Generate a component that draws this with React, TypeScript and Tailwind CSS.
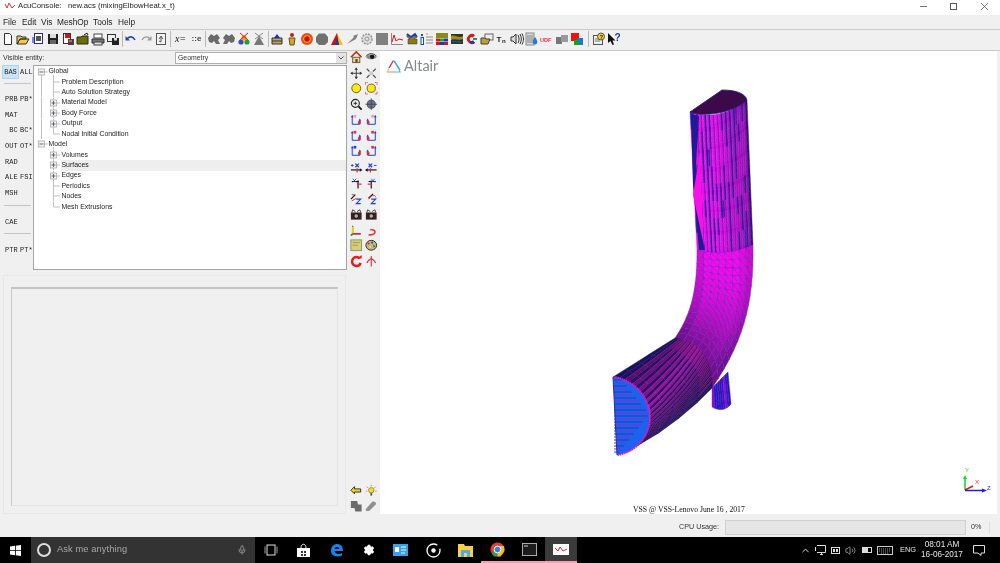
import type { ReactNode } from "react";
import { ChevronUp, Mic, Settings, Volume2 } from "lucide-react";

type Pt = [number, number];
type Curve = [Pt, Pt, Pt, Pt];

// bezier helper for the mesh strips
function bez(c: Curve, t: number): Pt {
  const u = 1 - t;
  const a = u * u * u;
  const b = 3 * u * u * t;
  const d = 3 * u * t * t;
  const e = t * t * t;
  return [
    a * c[0][0] + b * c[1][0] + d * c[2][0] + e * c[3][0],
    a * c[0][1] + b * c[1][1] + d * c[2][1] + e * c[3][1],
  ];
}

function line(a: Pt, b: Pt): Curve {
  return [a, [a[0] + (b[0] - a[0]) / 3, a[1] + (b[1] - a[1]) / 3], [a[0] + (2 * (b[0] - a[0])) / 3, a[1] + (2 * (b[1] - a[1])) / 3], b];
}

function mix(a: number[], b: number[], k: number) {
  const v = a.map((x, i) => Math.round(x + (b[i] - x) * k));
  return `rgb(${v[0]},${v[1]},${v[2]})`;
}

function noise(i: number, j: number) {
  const x = Math.sin(i * 12.9 + j * 78.2) * 43758.5;
  return x - Math.floor(x);
}

type StripProps = {
  l: Curve;
  r: Curve;
  b0: Pt;
  b1: Pt;
  nt: number;
  ns: number;
  color: (i: number, j: number, t: number, s: number) => string;
  stroke?: string;
  diag?: boolean;
};

function Strip({ l, r, b0, b1, nt, ns, color, stroke, diag }: StripProps) {
  const p = (t: number, s: number): Pt => {
    const a = bez(l, t);
    const c = bez(r, t);
    const k = 4 * s * (1 - s);
    return [
      a[0] + (c[0] - a[0]) * s + k * (b0[0] * (1 - t) + b1[0] * t),
      a[1] + (c[1] - a[1]) * s + k * (b0[1] * (1 - t) + b1[1] * t),
    ];
  };
  const out: ReactNode[] = [];
  for (let i = 0; i < nt; i++) {
    for (let j = 0; j < ns; j++) {
      const t0 = i / nt;
      const t1 = (i + 1) / nt;
      const s0 = j / ns;
      const s1 = (j + 1) / ns;
      const q = [p(t0, s0), p(t0, s1), p(t1, s1), p(t1, s0)];
      const fill = color(i, j, (t0 + t1) / 2, (s0 + s1) / 2);
      out.push(
        <polygon key={`${i}-${j}`} points={q.map((v) => v.join(",")).join(" ")} fill={fill} stroke={stroke ?? fill} strokeWidth={stroke ? 0.4 : 0.4} />,
      );
      if (diag && stroke) {
        out.push(<line key={`d${i}-${j}`} x1={q[0][0]} y1={q[0][1]} x2={q[2][0]} y2={q[2][1]} stroke={stroke} strokeWidth={0.35} />);
      }
    }
  }
  return <g>{out}</g>;
}

const MAG = [248, 10, 240];
const PUR = [115, 15, 140];
const DK = [40, 10, 70];

function ElbowMesh() {
  return (
    <svg className="block h-full w-full" viewBox="380 51 617 463">
      {/* small stub behind the bend */}
      <Strip
        l={line([712, 388], [712, 407])}
        r={line([728, 372], [731, 404])}
        b0={[0, 0]}
        b1={[1, 4]}
        nt={3}
        ns={9}
        color={(i, j) => (j % 2 ? "#3a12d0" : j % 3 === 0 ? "#8a10c8" : "#2a1ab0")}
      />
      {/* upper straight tube */}
      <Strip
        l={line([690, 112], [697, 250])}
        r={line([747, 100], [753, 245])}
        b0={[0, 8]}
        b1={[0, 5]}
        nt={24}
        ns={28}
        color={(i, j, t, s) => {
          const n = noise(Math.floor(i / 3), j);
          if (s > 0.95) return "#321078";
          if (j % 2 === 1) return n < 0.55 ? "#3a1aa0" : "#9a12c8";
          return n < 0.12 ? "#5a18b0" : mix(MAG, PUR, Math.max(0, (s - 0.4) * 1.3));
        }}
      />
      <polygon points="691,114 699,116 696,165 705,250 699,250 693,185" fill="#1e1a98" />
      <polygon points="693,195 700,152 704,246" fill="#f812e8" />
      {/* triangulated bend */}
      <Strip
        l={[[697, 250], [697, 285], [693, 312], [675, 338]]}
        r={[[753, 245], [754, 300], [745, 340], [712, 388]]}
        b0={[0, 5]}
        b1={[10, -10]}
        nt={15}
        ns={8}
        stroke="#5a22b0"
        diag
        color={(i, j, t, s) => mix(MAG, PUR, Math.min(1, t * t * 0.95 + Math.max(0, s - 0.72) * 1.5 + (s < 0.12 ? 0.2 : 0)))}
      />
      {/* lower straight tube */}
      <Strip
        l={line([675, 338], [613, 377])}
        r={[[712, 388], [690, 412], [650, 443], [617, 455]]}
        b0={[10, -10]}
        b1={[35, 0]}
        nt={5}
        ns={32}
        color={(i, j, t, s) => {
          if (s < 0.06 || s > 0.93) return "#1c1060";
          const b = Math.min(1, Math.abs(s - 0.38) * 1.9);
          const hot = mix([170, 15, 165], DK, b);
          if (j % 2) return i < 1 ? mix(PUR, DK, 0.3) : "#2c1068";
          return hot;
        }}
      />
      {/* open end of the tube */}
      <path d="M613 377C630 378 650 395 650 417C650 437 635 453 617 455Z" fill="#1c62ec" />
      {Array.from({ length: 25 }, (_, i) => (
        <path key={i} d={`M614 ${380 + i * 3}H${i < 12 ? 622 + i * 2.4 : 648 - (i - 12) * 2.4}`} stroke={i % 2 ? "#7a30d0" : "#1440c0"} strokeWidth="1" />
      ))}
      <path d="M613 377C630 378 650 395 650 417C650 437 635 453 617 455" fill="none" stroke="#e018d8" strokeWidth="1.8" strokeDasharray="1.6 0.6" />
      <path d="M613 377L617 455" stroke="#2a2ab0" strokeWidth="1" />
      {/* cut face on top */}
      <path d="M690 112L722 90C735 90 745 93 747 100C735 112 705 118 690 112Z" fill="#3c0a48" stroke="#1c1a80" strokeWidth="0.8" />
      {/* axis triad */}
      <path d="M965 490V478" stroke="#00e020" strokeWidth="1.5" />
      <path d="M963 479L965 475L967 479Z" fill="#00e020" />
      <path d="M965 490L973 486" stroke="#f01010" strokeWidth="1.5" />
      <path d="M965 490.5H983" stroke="#1020f0" strokeWidth="1.5" />
      <path d="M982 488.5L987 490.5L982 492.5Z" fill="#1020f0" />
      <text x="965" y="472" fontSize="6" fill="#20d040" fontFamily="Liberation Sans">Y</text>
      <text x="975" y="484" fontSize="6" fill="#f03030" fontFamily="Liberation Sans">X</text>
      <text x="987" y="490" fontSize="6" fill="#2030f0" fontFamily="Liberation Sans">Z</text>
    </svg>
  );
}

function Ic({ children, size = 14 }: { children: ReactNode; size?: number }) {
  return (
    <svg width={size} height={size} viewBox="0 0 14 14" className="block">
      {children}
    </svg>
  );
}

const lump = "M1 6L4 2L7 4L10 2L13 6L11 8L13 12L9 12L7 9L5 11L2 10Z";
const floppy = (
  <>
    <rect x="2" y="2" width="10" height="10" fill="#222" />
    <rect x="4" y="2" width="6" height="4" fill="#ddd" />
    <rect x="4" y="8" width="6" height="4" fill="#666" />
  </>
);

const fileIcons: ReactNode[] = [
  <Ic><path d="M3.5 1.5H8.5L10.5 3.5V12.5H3.5Z" fill="#fff" stroke="#333" /></Ic>,
  <Ic><path d="M1 12V4H5L6 5H10V7H4L1 12L4 7H13L10 12Z" fill="#f2c84a" stroke="#333" /></Ic>,
  <Ic><rect x="1" y="5" width="4" height="6" fill="#7c86ea" /><rect x="3.5" y="1.5" width="8" height="10" fill="#fff" stroke="#2c2c6a" /><rect x="5" y="4" width="5" height="5" fill="#555" /></Ic>,
  <Ic>{floppy}</Ic>,
  <Ic><rect x="2.5" y="1.5" width="7" height="10" fill="#fff" stroke="#333" /><rect x="4" y="2" width="5" height="4" fill="#d01818" /><rect x="7" y="7" width="6" height="6" fill="#444" /><rect x="8" y="8" width="3" height="2" fill="#d55" /></Ic>,
  <Ic><path d="M1 12V5H5L6 4H12V12Z" fill="#6c6c10" stroke="#2c2c08" /><path d="M8 3L11 1L12 3" fill="none" stroke="#222" /></Ic>,
  <Ic><rect x="3" y="2" width="8" height="4" fill="#fff" stroke="#444" /><path d="M1 7H13V11H1Z" fill="#777" stroke="#333" /><rect x="3" y="10" width="8" height="3" fill="#ddd" stroke="#444" /></Ic>,
  <Ic><rect x="1.5" y="2.5" width="8" height="7" fill="#eee" stroke="#333" /><rect x="6" y="6" width="7" height="7" fill="#222" /><rect x="8" y="6" width="3" height="2.5" fill="#ddd" /></Ic>,
];

const editIcons: ReactNode[] = [
  <Ic><path d="M3 7C5 4 9 4 11 8" fill="none" stroke="#2846a8" strokeWidth="1.6" /><path d="M1.5 4V8.5H6Z" fill="#2846a8" /></Ic>,
  <Ic><path d="M11 7C9 4 5 4 3 8" fill="none" stroke="#999" strokeWidth="1.4" /><path d="M12.5 4V8.5H8Z" fill="#999" /></Ic>,
  <Ic><rect x="2.5" y="1.5" width="9" height="11" fill="#f2f2f2" stroke="#555" /><path d="M5 7L7 4L9 7M7 5V10L5 9" fill="none" stroke="#555" /></Ic>,
];

const meshIcons: ReactNode[] = [
  <Ic><path d={lump} fill="#6a6a6a" /></Ic>,
  <Ic><path d={lump} fill="#6a6a6a" transform="matrix(-1 0 0 1 14 0)" /></Ic>,
  <Ic><circle cx="4" cy="10" r="2.6" fill="#3050c0" /><circle cx="10" cy="10" r="2.6" fill="#2a9a3a" /><circle cx="7" cy="6" r="2.6" fill="#e0a020" /><path d="M3 1L11 8M11 1L3 8" stroke="#d82020" /></Ic>,
  <Ic><path d="M7 4L12 13H2Z" fill="#777" /><path d="M3 1L11 7M11 1L3 7" stroke="#888" /></Ic>,
];

const toolIcons: ReactNode[] = [
  <Ic><path d="M2 6H12V12H2Z" fill="#b8a860" stroke="#333" /><path d="M4 6L7 2L10 6Z" fill="#1830c0" /><path d="M2 9H12" stroke="#333" /></Ic>,
  <Ic><circle cx="7" cy="3" r="2" fill="#c81818" /><path d="M4 6H10L9 13H5Z" fill="#d4a818" stroke="#553" /></Ic>,
  <Ic><circle cx="7" cy="7" r="6" fill="#e84a20" /><circle cx="7" cy="7" r="3.4" fill="#d01010" stroke="#ffc020" /></Ic>,
  <Ic><path d="M4 1.5H10L13 5V10L10 13H4L1 10V5Z" fill="#707070" /></Ic>,
  <Ic><path d="M7 1L13 13H1Z" fill="#f0c010" /><path d="M7 1L9 13H1Z" fill="#c01818" /><path d="M7 5L5 13H9Z" fill="#1838b8" /></Ic>,
  <Ic><path d="M2 12L9 5L11 7ZM8 4L13 2L11 7Z" fill="#808080" /></Ic>,
  <Ic><circle cx="7" cy="7" r="5" fill="#ddd" stroke="#999" strokeWidth="1.6" strokeDasharray="2 1" /><circle cx="7" cy="7" r="2" fill="none" stroke="#999" /></Ic>,
  <Ic><rect x="1" y="1" width="12" height="12" fill="#808080" /></Ic>,
  <Ic><path d="M1.5 1V12.5H13" fill="none" stroke="#888" /><path d="M2 10L4 3L6 9L9 7L13 8" fill="none" stroke="#d81818" /></Ic>,
  <Ic><path d="M2 2L6 5L10 2L12 5L9 7H12V12H3V7H5L2 5Z" fill="#8a7a18" stroke="#333" strokeWidth="0.5" /><path d="M2 2L6 5L10 2L12 5" fill="none" stroke="#1838d0" strokeWidth="1.6" /></Ic>,
  <Ic><rect x="1" y="2" width="2" height="2" fill="#1848c0" /><rect x="1" y="5.5" width="2.5" height="7" fill="#fff" stroke="#1848c0" /><path d="M6 5H13M6 8H13M6 11H13" stroke="#888" /><path d="M7 1V3" stroke="#e09020" /></Ic>,
  <Ic><rect x="1" y="1" width="12" height="5" fill="#8a8a18" /><rect x="1" y="6.5" width="4" height="3" fill="#d01818" /><rect x="5" y="6.5" width="4" height="3" fill="#20a040" /><rect x="9" y="6.5" width="4" height="3" fill="#1838c8" /><rect x="1" y="10" width="4" height="3" fill="#d01818" /><rect x="5" y="10" width="4" height="3" fill="#1838c8" /><rect x="9" y="10" width="4" height="3" fill="#d01818" /></Ic>,
  <Ic><rect x="1" y="2" width="12" height="10" fill="#2c3a18" /><path d="M1 4C4 2 9 7 13 4V7C9 9 5 6 1 8Z" fill="#a88a18" /><path d="M2 10C5 8 9 11 12 10" stroke="#1c4ab8" strokeWidth="1.4" fill="none" /></Ic>,
  <Ic><path d="M10 3A5 5 0 1 0 10 11L8 8.5A2 2 0 1 1 8 5.5Z" fill="#d81818" /><path d="M4 10A5 5 0 0 0 10 11L8 8.5Z" fill="#1838c8" /><rect x="8" y="6" width="4" height="2" fill="#18a838" /></Ic>,
  <Ic><rect x="5" y="2" width="8" height="6" fill="#eee" stroke="#666" /><path d="M1 12V6H5L6 7H10L8 12Z" fill="#b8a040" stroke="#443" /></Ic>,
  <Ic><text x="1.5" y="10" fontSize="8" fontWeight="700" fontFamily="Liberation Sans" fill="#222">T</text><text x="7" y="11" fontSize="6" fontWeight="700" fontFamily="Liberation Sans" fill="#222">n</text></Ic>,
  <Ic><path d="M1 5H3L6 2V12L3 9H1Z" fill="#ddd" stroke="#333" /><path d="M8 3C9.4 6 9.4 8 8 11M10 2C11.8 6 11.8 8 10 12M12 1.5C14 6 14 8 12 12.5" fill="none" stroke="#333" /></Ic>,
  <Ic><rect x="1" y="1" width="8" height="12" fill="#d8d8d8" stroke="#888" /><path d="M2 4H8M2 6H8M2 8H8M2 10H8" stroke="#888" /><path d="M10 5C13 9 13 12 10 12.5C7 12 7 9 10 5Z" fill="#2878d8" /></Ic>,
  <Ic><text x="0" y="9.5" fontSize="5.6" fontWeight="700" fontFamily="Liberation Sans" fill="#f03060">UDF</text></Ic>,
  <Ic><rect x="1" y="5" width="6" height="7" fill="#777" /><rect x="6" y="3" width="7" height="7" fill="#999" /></Ic>,
  <Ic><rect x="1" y="1" width="8" height="8" fill="#f01010" /><rect x="7" y="6" width="6" height="7" fill="#1878d8" /><rect x="4" y="8" width="5" height="5" fill="#18a020" /></Ic>,
];

const helpIcons: ReactNode[] = [
  <Ic><rect x="1.5" y="3.5" width="9" height="9" fill="#eee" stroke="#555" /><circle cx="9" cy="4.5" r="3.5" fill="#f0d020" stroke="#554" /><path d="M3 7H7M3 9H8" stroke="#777" /><text x="7.5" y="7" fontSize="6" fontWeight="700" fontFamily="Liberation Sans" fill="#222">?</text></Ic>,
  <Ic><path d="M1 1V11L3.5 9L5.5 13L7 12.4L5.5 8.5H8.5Z" fill="#111" /><text x="7.5" y="9" fontSize="10" fontWeight="700" fontFamily="Liberation Sans" fill="#1838a8">?</text></Ic>,
];

function Axis({ flip, mid }: { flip?: boolean; mid?: string }) {
  return (
    <Ic>
      <g transform={flip ? "matrix(-1 0 0 1 14 0)" : undefined}>
        <path d="M2.5 2V11.5H11V7" fill="none" stroke="#1c3ee0" strokeWidth="1.1" />
        <path d="M1 3.5L2.5 1L4 3.5ZM11 5L12.5 7.5H9.5Z" fill="#1c3ee0" />
        <rect x="4" y="1" width="3" height="3" fill={mid ?? "#e8a0b0"} />
        <rect x="9" y="8" width="3" height="3" fill="#e82030" />
      </g>
    </Ic>
  );
}

function Spin({ flip, minus }: { flip?: boolean; minus?: boolean }) {
  return (
    <Ic>
      <g transform={flip ? "matrix(-1 0 0 1 14 0)" : undefined}>
        <path d="M1 10H12" stroke="#111" strokeWidth="1.3" />
        <path d="M11 8L14 10L11 12Z" fill="#111" />
        <path d="M6 3L10 7M10 3L6 7" stroke="#1c3ee0" strokeWidth="1.4" />
        <path d={minus ? "M1 5H4" : "M1 5H4M2.5 3.5V6.5"} stroke="#1c3ee0" />
        <path d="M8 8V13" stroke="#e02030" strokeWidth="1.3" />
      </g>
    </Ic>
  );
}

function Camera() {
  return (
    <Ic>
      <rect x="1" y="5" width="12" height="8" fill="#3a2020" />
      <circle cx="7" cy="9" r="2.6" fill="#aaa" stroke="#111" />
      <path d="M2 5L3 2L6 4M12 5L11 2L8 4" fill="none" stroke="#333" />
    </Ic>
  );
}

const viewIcons: ReactNode[] = [
  <Ic><path d="M1 7L7 1L13 7" fill="none" stroke="#c03010" strokeWidth="1.8" /><rect x="3" y="7" width="8" height="6" fill="#e8d8a0" stroke="#553" /><rect x="6" y="9" width="2.5" height="4" fill="#804010" /></Ic>,
  <Ic><path d="M1 7C4 3 10 3 13 7C10 10 4 10 1 7Z" fill="#888" /><circle cx="8" cy="6.5" r="2.4" fill="#111" /><path d="M1 6C4 2 10 2 13 6" fill="none" stroke="#222" /></Ic>,
  <Ic><path d="M7 1V13M1 7H13" stroke="#333" /><path d="M5 3L7 0.5L9 3ZM5 11L7 13.5L9 11ZM3 5L0.5 7L3 9ZM11 5L13.5 7L11 9Z" fill="#333" /></Ic>,
  <Ic><path d="M2 2L5 5M12 2L9 5M2 12L5 9M12 12L9 9" stroke="#555" strokeWidth="1.4" /><rect x="5" y="5" width="4" height="4" fill="#ccc" /></Ic>,
  <Ic><circle cx="7" cy="7" r="5" fill="#ffea00" stroke="#555" /></Ic>,
  <Ic><circle cx="7" cy="7" r="4.6" fill="#ffea00" stroke="#555" /><path d="M0.5 3V0.5H3M11 .5H13.5V3M13.5 11V13.5H11M3 13.5H0.5V11" fill="none" stroke="#e83020" strokeDasharray="1.5 .5" /></Ic>,
  <Ic><circle cx="6" cy="6" r="4.5" fill="#eee" stroke="#222" strokeWidth="1.2" /><path d="M4 6H8M6 4V8" stroke="#222" /><path d="M9.5 9.5L13 13" stroke="#111" strokeWidth="2" /></Ic>,
  <Ic><circle cx="7" cy="7" r="4.5" fill="#7070a0" stroke="#444" /><path d="M7 0.5V13.5M0.5 7H13.5" stroke="#444" /></Ic>,
  <Axis mid="#e8a0b0" />,
  <Axis flip mid="#e8a0b0" />,
  <Axis mid="#e83040" />,
  <Axis flip mid="#e83040" />,
  <Axis mid="#1c3ee0" />,
  <Axis flip mid="#e83040" />,
  <Spin />,
  <Spin flip minus />,
  <Ic><path d="M2 5H10M9 4V13" stroke="#111" strokeWidth="1.3" /><path d="M3 2L7 6M7 2L3 6" stroke="#2a50e0" /><path d="M8 8H13" stroke="#e02030" strokeWidth="1.3" /></Ic>,
  <Ic><path d="M4 5H12M7 4V13" stroke="#111" strokeWidth="1.3" /><path d="M7 2L11 6M11 2L7 6" stroke="#2a50e0" /><path d="M3 8H8" stroke="#e02030" strokeWidth="1.3" /></Ic>,
  <Ic><path d="M1 8L6 3" stroke="#111" strokeWidth="1.3" /><path d="M2 3H5M2 10L7 7" stroke="#e02030" /><path d="M7 8H12L7 13H12" fill="none" stroke="#1c3ee0" strokeWidth="1.2" /></Ic>,
  <Ic><path d="M9 2L4 7" stroke="#111" strokeWidth="1.3" /><path d="M4 8C7 3 12 3 12 6" fill="none" stroke="#e02030" /><path d="M7 8H12L7 13H12" fill="none" stroke="#1c3ee0" strokeWidth="1.2" /></Ic>,
  <Camera />,
  <Camera />,
  <Ic><path d="M3 2V11H12" fill="none" stroke="#111" /><path d="M3 3V11" stroke="#f0d000" strokeWidth="2" /><path d="M3 11H12" stroke="#e02030" strokeWidth="1.5" /><path d="M1 13L3 11" stroke="#18a020" strokeWidth="2" /></Ic>,
  <Ic><path d="M4 12C10 13 13 9 10 7C8 6 7 7 6 6" fill="none" stroke="#e83040" strokeWidth="1.8" /></Ic>,
  <Ic><rect x="1" y="1" width="12" height="12" fill="#d8cf70" stroke="#888" /><path d="M3 4H11M3 7H9" stroke="#a09840" /></Ic>,
  <Ic><ellipse cx="7" cy="7" rx="6" ry="5.5" fill="#c8b880" stroke="#222" /><circle cx="4" cy="5" r="1.2" fill="#e02020" /><circle cx="8" cy="4" r="1.2" fill="#2040e0" /><circle cx="10" cy="8" r="1.2" fill="#20a020" /><circle cx="6" cy="9" r="1.2" fill="#f0e020" /></Ic>,
  <Ic><path d="M11 4A5 5 0 1 0 12 9" fill="none" stroke="#e02020" strokeWidth="2.8" /><path d="M8 4H13V0Z" fill="#e02020" /></Ic>,
  <Ic><path d="M7 1V13" stroke="#d03030" strokeWidth="1.2" /><path d="M2 9C3 6 5 5 7 4C9 5 11 6 12 9" fill="none" stroke="#d03030" strokeWidth="1.2" /></Ic>,
];

const navRows = [
  ["BAS", "ALL"],
  null,
  ["PRB", "PB*"],
  ["MAT", ""],
  [" BC", "BC*"],
  ["OUT", "OT*"],
  ["RAD", ""],
  ["ALE", "FSI"],
  ["MSH", ""],
  null,
  ["CAE", ""],
  null,
  ["PTR", "PT*"],
];

function SideNav() {
  return (
    <div className="w-[33px] shrink-0 text-[7px] leading-none text-[#222] [font-family:'Liberation_Mono',monospace]">
      {navRows.map((row, i) =>
        row ? (
          <div key={i} className={i === 0 ? "flex h-[14px] items-center" : "flex h-[15.7px] items-center"}>
            <span className={i === 0 ? "ml-[3px] flex h-[12px] w-[15px] items-center justify-center bg-[#cce4f7] outline outline-[#a8d4f5]" : "ml-[5px] w-[13px] whitespace-pre"}>{row[0]}</span>
            <span className="ml-[2px]">{row[1]}</span>
          </div>
        ) : (
          <div key={i} className="h-[12.7px] pt-[3.5px]">
            <div className="ml-[4px] h-[1px] w-[27px] bg-[#c4c4c4]" />
          </div>
        ),
      )}
    </div>
  );
}

type TreeNode = {
  label: string;
  level: 0 | 1;
  exp?: "plus" | "minus";
  last?: boolean;
  trunk?: boolean;
  hl?: boolean;
};

const tree: TreeNode[] = [
  { label: "Global", level: 0, exp: "minus", trunk: true },
  { label: "Problem Description", level: 1, trunk: true },
  { label: "Auto Solution Strategy", level: 1, trunk: true },
  { label: "Material Model", level: 1, exp: "plus", trunk: true },
  { label: "Body Force", level: 1, exp: "plus", trunk: true },
  { label: "Output", level: 1, exp: "plus", trunk: true },
  { label: "Nodal Initial Condition", level: 1, last: true, trunk: true },
  { label: "Model", level: 0, exp: "minus" },
  { label: "Volumes", level: 1, exp: "plus" },
  { label: "Surfaces", level: 1, exp: "plus", hl: true },
  { label: "Edges", level: 1, exp: "plus" },
  { label: "Periodics", level: 1 },
  { label: "Nodes", level: 1 },
  { label: "Mesh Extrusions", level: 1, last: true },
];

function TreeGuide({ n }: { n: TreeNode }) {
  const ex = n.level === 0 ? 7.5 : 19.5;
  return (
    <svg width="27" height="10.4" viewBox="0 0 27 10.4" className="shrink-0" fill="none">
      {n.level === 0 && n.trunk && <path d="M7.5 5V10.4" stroke="#c0c0c0" />}
      {n.level === 0 && <path d="M7.5 5H14" stroke="#c0c0c0" />}
      {n.level === 0 && <path d="M19.5 8V10.4" stroke="#c0c0c0" />}
      {n.level === 1 && n.trunk && <path d="M7.5 0V10.4" stroke="#c0c0c0" />}
      {n.level === 1 && <path d={n.last ? "M19.5 0V5H26" : "M19.5 0V10.4M19.5 5H26"} stroke="#c0c0c0" />}
      {n.exp && (
        <>
          <rect x={ex - 3} y="2" width="6" height="6" fill="#f4f4f4" stroke="#a8a8a8" strokeWidth="0.8" />
          <path d={n.exp === "plus" ? `M${ex - 2} 5H${ex + 2}M${ex} 3V7` : `M${ex - 2} 5H${ex + 2}`} stroke="#445" strokeWidth="0.8" />
        </>
      )}
    </svg>
  );
}

function Tree() {
  return (
    <div className="h-[205px] w-[314px] border border-[#a4a4a4] bg-white pt-[0.5px] text-[6.9px] leading-none text-[#222] [font-family:'Liberation_Sans',sans-serif]">
      {tree.map((n) => (
        <div key={n.label} className="flex h-[10.42px] items-center">
          <TreeGuide n={n} />
          <span className={n.level === 0 ? "-ml-[13px] pl-[0.5px]" : "flex h-full flex-1 items-center pl-[0.5px]" + (n.hl ? " bg-[#eeeeee]" : "")}>{n.label}</span>
        </div>
      ))}
    </div>
  );
}

function Toolbar() {
  const Cell = ({ c }: { c: ReactNode }) => <div className="flex h-[15px] w-[15px] shrink-0 items-center justify-center">{c}</div>;
  const Sep = () => <div className="mx-[1px] h-[16px] w-[1px] shrink-0 bg-[#b8b8b8]" />;
  return (
    <div className="flex h-[22px] shrink-0 items-center border-y border-[#c8c8c8] pb-[3px] pl-[0.5px]">
      {fileIcons.map((c, i) => <Cell key={i} c={c} />)}
      <Sep />
      {editIcons.map((c, i) => <Cell key={i} c={c} />)}
      <Sep />
      <div className="ml-[1px] w-[16px] text-center text-[10px] italic leading-none text-[#222] [font-family:'Liberation_Serif',serif]">x=</div>
      <div className="-mr-[1px] w-[16px] text-center text-[8px] font-bold leading-none text-[#444] [font-family:'Liberation_Sans',sans-serif]">::e</div>
      <Sep />
      {meshIcons.map((c, i) => <Cell key={i} c={c} />)}
      <Sep />
      {toolIcons.map((c, i) => <Cell key={i} c={c} />)}
      <div className="mx-[3px] h-[16px] w-[1px] shrink-0 bg-[#b8b8b8]" />
      {helpIcons.map((c, i) => <Cell key={i} c={c} />)}
    </div>
  );
}

function AltairLogo() {
  return (
    <div className="absolute left-[6px] top-[8px] flex items-center gap-[3px]">
      <svg width="15" height="15" viewBox="0 0 15 15">
        <path d="M7.5 1.5L3 9" stroke="#d8304a" strokeWidth="1.4" fill="none" />
        <path d="M8 2L14 11" stroke="#3aa8d8" strokeWidth="1.4" fill="none" />
        <path d="M1 13H8" stroke="#f0b040" strokeWidth="1.4" fill="none" />
        <path d="M8 13H14L13 10.5" stroke="#58b8d8" strokeWidth="1.2" fill="none" />
        <path d="M1 13L3 9.5" stroke="#c8c8c8" strokeWidth="1.2" fill="none" />
      </svg>
      <span className="text-[14.5px] leading-none text-[#85898d] [font-family:Lato,sans-serif]">Altair</span>
    </div>
  );
}

function Viewport() {
  return (
    <div className="relative h-[463px] w-[617px] shrink-0 overflow-hidden bg-white">
      <ElbowMesh />
      <AltairLogo />
      <div className="absolute bottom-[-1px] left-[253px] whitespace-nowrap text-[7.7px] leading-[10px] text-[#111] [font-family:'Liberation_Serif',serif]">
        VSS @ VSS-Lenovo June 16 , 2017
      </div>
    </div>
  );
}

function Taskbar() {
  const Slot = ({ x, children, on, active }: { x: string; children: ReactNode; on?: boolean; active?: boolean }) => (
    <div className={x + " flex h-full shrink-0 items-center justify-center " + (active ? "bg-[#3a3a3a] " : "") + (on ? "border-b-2 border-[#f0a0b0]" : "")}>{children}</div>
  );
  return (
    <div className="flex h-[26px] shrink-0 items-center bg-black text-[8.5px] text-[#ddd] [font-family:'Liberation_Sans',sans-serif]">
      <div className="flex h-full w-[31px] items-center justify-center">
        <svg width="11" height="11" viewBox="0 0 11 11"><path d="M0 1.5L5 .8V5.2H0ZM5.8 .7L11 0V5.2H5.8ZM0 6H5V10.2L0 9.5ZM5.8 6H11V11L5.8 10.3Z" fill="#fff" /></svg>
      </div>
      <div className="flex h-full w-[224px] items-center bg-[#333333]">
        <div className="ml-[6px] h-[14px] w-[14px] rounded-full border-2 border-[#ddd]" />
        <span className="ml-[6px] flex-1 text-[9.3px] tracking-[0.1px] text-[#a8a8a8]">Ask me anything</span>
        <Mic size={10} className="mr-[8px] text-[#999]" />
      </div>
      <Slot x="w-[32px]">
        <svg width="14" height="12" viewBox="0 0 14 12"><rect x="3" y="1" width="8" height="10" fill="none" stroke="#ddd" /><path d="M1 2.5V9.5M13 2.5V9.5" stroke="#999" /></svg>
      </Slot>
      <Slot x="w-[33px]">
        <svg width="15" height="15" viewBox="0 0 15 15"><path d="M1 5H14V14H1Z" fill="#fff" /><path d="M5 5C5 0 10 0 10 5" fill="none" stroke="#fff" /><path d="M5 8H7V10H5ZM8 8H10V10H8ZM5 11H7V13H5ZM8 11H10V13H8Z" fill="#333" /></svg>
      </Slot>
      <Slot x="w-[33px]">
        <svg width="14" height="14" viewBox="0 0 14 14"><path d="M1 8C1 3 4 1 7.5 1C11 1 13 4 13 8H4.5C4.8 11 9 12 12 10V12.5C8 14.5 1 13.5 1 8ZM4.5 5.8H9.5C9.3 3.3 5 3.3 4.5 5.8Z" fill="#1a84e8" /></svg>
      </Slot>
      <Slot x="w-[31px]"><Settings size={12} fill="#fff" className="text-white" /></Slot>
      <Slot x="w-[33px]">
        <svg width="15" height="12" viewBox="0 0 15 12"><rect width="15" height="12" fill="#3aa0e8" /><rect x="2" y="3" width="4" height="5" fill="#fff" /><path d="M8 3H13M8 6H13M8 9H12" stroke="#dff" /></svg>
      </Slot>
      <Slot x="w-[32px]">
        <svg width="15" height="15" viewBox="0 0 15 15"><circle cx="7.5" cy="7.5" r="6.5" fill="none" stroke="#fff" strokeWidth="1.3" strokeDasharray="34 4" /><circle cx="7.5" cy="7.5" r="2.2" fill="#fff" /></svg>
      </Slot>
      <Slot x="w-[32px]">
        <svg width="15" height="13" viewBox="0 0 15 13"><path d="M0 0H6L7 2H15V13H0Z" fill="#f8d048" /><path d="M3 6H12V13H9V9H6V13H3Z" fill="#58a8e0" /></svg>
      </Slot>
      <Slot x="w-[32px]" on>
        <svg width="15" height="15" viewBox="0 0 15 15"><circle cx="7.5" cy="7.5" r="7" fill="#e04030" /><path d="M7.5 7.5L1.5 11L4 14.5L7.5 14.5Z" fill="#30a040" /><path d="M7.5 4H14L14.5 9L10.5 14.5L7.5 14.5Z" fill="#f0c020" /><circle cx="7.5" cy="7.5" r="3.4" fill="#3a80e8" stroke="#fff" /></svg>
      </Slot>
      <Slot x="w-[32px]" on>
        <svg width="15" height="13" viewBox="0 0 15 13"><rect x=".5" y=".5" width="14" height="12" fill="#1c1c1c" stroke="#aaa" /><path d="M2 3H6" stroke="#ccc" /></svg>
      </Slot>
      <Slot x="w-[32px]" on active>
        <svg width="16" height="11" viewBox="0 0 16 11"><rect width="16" height="11" fill="#fff" /><path d="M2 4L5 7L7 3L10 7L14 5" fill="none" stroke="#e02030" /></svg>
      </Slot>
      <div className="flex flex-1 items-center justify-end text-[#e8e8e8]">
        <div className="flex w-[14px] justify-center"><ChevronUp size={11} /></div>
        <div className="flex w-[16px] justify-center">
          <svg width="11" height="10" viewBox="0 0 11 10"><path d="M2 .5H10.5V7.5H2M5 9.5H8M6.5 7.5V9.5M0.5 2V6" fill="none" stroke="#ddd" /></svg>
        </div>
        <div className="flex w-[14px] justify-center">
          <svg width="9" height="7" viewBox="0 0 9 7"><rect x=".5" y=".5" width="8" height="6" fill="none" stroke="#ddd" /><rect x="2" y="2" width="2" height="3" fill="#ddd" /><rect x="5" y="2" width="2" height="3" fill="#ddd" /></svg>
        </div>
        <div className="flex w-[17px] justify-center"><Volume2 size={11} strokeWidth={1.3} /></div>
        <div className="flex w-[16px] justify-center">
          <svg width="10" height="6" viewBox="0 0 10 6"><rect x=".5" y=".5" width="9" height="5" fill="none" stroke="#ddd" /><rect x="1" y="1" width="5" height="4" fill="#ddd" /></svg>
        </div>
        <div className="flex w-[20px] justify-center">
          <svg width="16" height="9" viewBox="0 0 16 9"><rect x=".5" y=".5" width="15" height="8" fill="none" stroke="#ccc" /><path d="M2 3H14M2 5H14M4 7H12" stroke="#999" strokeDasharray="1 1" /></svg>
        </div>
        <div className="w-[19px] whitespace-nowrap pl-[5px] text-[7.4px]">ENG</div>
        <div className="w-[56px] text-center text-[8.2px] leading-[10.5px]">
          <div>08:01 AM</div>
          <div>16-06-2017</div>
        </div>
        <div className="flex w-[23px] justify-start pl-[3px]">
          <svg width="12" height="11" viewBox="0 0 12 11"><path d="M.5 .5H11.5V8H8V10.5L5 8H.5Z" fill="none" stroke="#ddd" /></svg>
        </div>
        <div className="w-[7px]" />
      </div>
    </div>
  );
}

export default function App() {
  return (
    <div className="flex h-[563px] w-[1000px] flex-col overflow-hidden bg-[#f0f0f0] blur-[0.45px] [font-family:'Liberation_Sans',sans-serif]">
      {/* title bar */}
      <div className="flex h-[15px] shrink-0 items-center bg-white pb-[3px] text-[7.7px] text-[#222]">
        <svg width="12" height="8" viewBox="0 0 12 8" className="ml-[4px]"><path d="M1 2L3 6L5 1L8 6L11 3" fill="none" stroke="#e03040" /></svg>
        <span className="ml-[2px] flex-1 whitespace-pre">AcuConsole:   new.acs (mixingElbowHeat.x_t)</span>
        <div className="flex items-center text-[#555]">
          <div className="mr-[23px] h-[1px] w-[7px] bg-[#777]" />
          <div className="mr-[24.5px] h-[7px] w-[7px] border border-[#555]" />
          <svg width="7" height="7" viewBox="0 0 7 7" className="mr-[12px]"><path d="M0 0L7 7M7 0L0 7" stroke="#555" strokeWidth="0.8" /></svg>
        </div>
      </div>
      {/* menu */}
      <div className="flex h-[14px] shrink-0 items-center pl-[3px] text-[8.3px] text-[#222]">
        <span className="w-[19px]">File</span>
        <span className="w-[19px]">Edit</span>
        <span className="w-[16px]">Vis</span>
        <span className="w-[36px]">MeshOp</span>
        <span className="w-[25px]">Tools</span>
        <span>Help</span>
      </div>
      <Toolbar />
      {/* main */}
      <div className="flex h-[463px] shrink-0">
        <div className="w-[350px] shrink-0">
          <div className="flex h-[14px] items-center justify-between pl-[3px] text-[7px] text-[#333]">
            <span>Visible entity:</span>
            <div className="mr-[3px] flex h-[12px] w-[172px] items-center border border-[#b0b0b0] bg-white pl-[2px] text-[6.9px]">
              <span className="flex-1">Geometry</span>
              <div className="flex h-full w-[10px] items-center justify-center bg-[#e4e4e4]">
                <svg width="6" height="4" viewBox="0 0 6 4"><path d="M.5 .5L3 3L5.5 .5" fill="none" stroke="#555" /></svg>
              </div>
            </div>
          </div>
          <div className="flex">
            <SideNav />
            <Tree />
          </div>
          <div className="ml-[3px] mt-[5px] h-[239px] w-[343px] border border-[#e8e8e8] px-[7px] pb-[7px] pt-[11px]">
            <div className="h-full border border-t-2 border-[#e4e4e4] border-l-[#c8c8c8] border-t-[#c4c4c4]" />
          </div>
        </div>
        {/* view tools */}
        <div className="-ml-[1px] flex w-[31px] shrink-0 flex-col justify-between [&_svg]:h-[12.5px] [&_svg]:w-[12.5px]">
          <div className="-mt-[1.5px] grid auto-rows-[15.7px] grid-cols-[15px_15px] items-center justify-items-center">
            {viewIcons.map((c, i) => <div key={i}>{c}</div>)}
          </div>
          <div className="grid auto-rows-[16px] grid-cols-[15px_15px] items-center justify-items-center">
            <Ic><path d="M1 7L5 3V5.5H12V9H5V11Z" fill="#f0d820" stroke="#222" /></Ic>
            <Ic><circle cx="7" cy="7" r="3" fill="#f8e020" stroke="#885" /><path d="M6 10H8V13H6Z" fill="#555" /><path d="M7 1V2.5M2 3L3.5 4.5M12 3L10.5 4.5M1 8H2.5M11.5 8H13" stroke="#e08020" /></Ic>
            <Ic><path d="M1 1H8L9 5H13V13H6L5 9H1Z" fill="#6c6c6c" /></Ic>
            <Ic><path d="M1 10L8 2C11 1 13 3 12 5L5 12C2 13 0 12 1 10Z" fill="#909090" /></Ic>
          </div>
        </div>
        <Viewport />
      </div>
      {/* status */}
      <div className="flex h-[23px] shrink-0 items-center justify-end pt-[3px] text-[7.2px] text-[#333]">
        <span className="mr-[6px]">CPU Usage:</span>
        <div className="h-[15px] w-[241px] border border-[#d0d0d0] bg-[#e6e6e6]" />
        <span className="ml-[5px] w-[18px]">0%</span>
        <div className="mr-[10px] h-[13px] w-[1px] bg-[#dcdcdc]" />
      </div>
      <Taskbar />
    </div>
  );
}
